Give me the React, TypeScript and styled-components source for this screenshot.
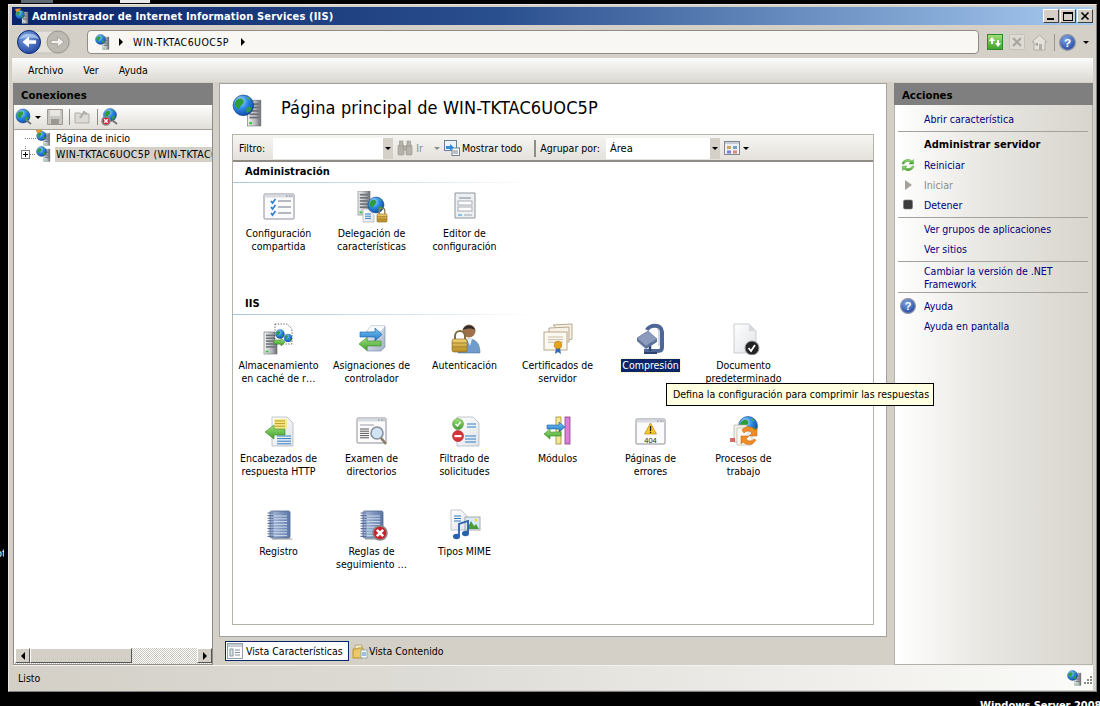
import React from 'react';
import styled, { createGlobalStyle } from 'styled-components';

const Global = createGlobalStyle`
  html, body { margin: 0; padding: 0; background: #000; overflow: hidden; }
  body { font-family: "DejaVu Sans Condensed", "Liberation Sans", sans-serif; font-size: 10.5px; color: #000; }
  * { box-sizing: border-box; }
  svg { flex: none; }
`;

const Page = styled.div`
  position: relative; width: 1100px; height: 706px; padding: 4px 3px 0 8px; background: #000; overflow: hidden;
`;
const Win = styled.div`
  width: 1089px; height: 688px; background: #d4d0c8; padding: 2px 3px 1px 3px;
  display: flex; flex-direction: column;
  border-top: 1px solid #e8e6e0; border-left: 1px solid #e8e6e0; border-right: 1px solid #808080; border-bottom: 1px solid #808080;
`;
const DesktopText = styled.div`
  position: absolute; right: 0; bottom: -6px; color: #fff; font: bold 11px "DejaVu Sans Condensed", sans-serif; white-space: nowrap; width: 120px;
`;
const DesktopSide = styled.div`
  position: absolute; left: -4px; top: 547px; color: #fff; font-size: 11px; width: 8px; overflow: hidden;
`;
const DesktopBit = styled.div<{ $l: number; $w: number; $c: string }>`
  position: absolute; top: 0; height: 3px; left: ${p => p.$l}px; width: ${p => p.$w}px; background: ${p => p.$c};
`;
const TitleBar = styled.div`
  height: 18px; flex: none; display: flex; align-items: center; padding: 0 0 0 2px;
  background: linear-gradient(to right, #0a246a 0%, #2a4f8e 45%, #a6caf0 100%);
  color: #fff; font-weight: bold; font-size: 11px;
`;
const TitleText = styled.span`
  margin-left: 2px; flex: 1; white-space: nowrap; letter-spacing: 0.17px;
`;
const WinBtn = styled.div`
  width: 16px; height: 14px; margin-left: 1px; background: #d4d0c8; display: flex; align-items: center; justify-content: center;
  border-top: 1px solid #fff; border-left: 1px solid #fff; border-right: 1px solid #404040; border-bottom: 1px solid #404040;
`;
const NavBar = styled.div`
  height: 33px; flex: none; display: flex; align-items: center; padding: 1px 0 0 5px; background: #d4d0c8;
`;
const Address = styled.div`
  width: 892px; height: 24px; margin-left: 14px; background: #f8f7f4; border: 1px solid #8f8c85; border-radius: 4px;
  display: flex; align-items: center; padding-left: 7px; flex: none; letter-spacing: .45px;
`;
const Crumb = styled.span`
  margin: 0 10px 0 8px; display: flex;
`;
const CrumbText = styled.span`
  margin-right: 4px;
`;
const Caret = styled.i<{ $c?: string }>`
  display: inline-block; width: 0; height: 0; border-top: 4px solid transparent; border-bottom: 4px solid transparent;
  border-left: 4px solid ${p => p.$c || '#000'};
`;
const Drop = styled.i<{ $c?: string }>`
  display: inline-block; width: 0; height: 0; border-left: 3px solid transparent; border-right: 3px solid transparent;
  border-top: 3px solid ${p => p.$c || '#000'}; flex: none;
`;
const NavTools = styled.div`
  display: flex; align-items: center; margin-left: 8px; gap: 6px;
`;
const NavSep = styled.div`
  width: 1px; height: 17px; background: #9a978f; margin-right: -2px;
`;
const MenuBar = styled.div`
  height: 24px; flex: none; display: flex; align-items: center; gap: 20px; padding-left: 16px;
  background: linear-gradient(#fbfbf9, #dcd9d3);
`;
const Main = styled.div`
  flex: none; height: 583px; display: flex; gap: 6px; padding: 1px 0 0 1px;
`;
const SidePanel = styled.div`
  width: 200px; flex: none; display: flex; flex-direction: column; border: 1px solid #8f8c85; border-top: 0; background: #fff; height: 582px;
`;
const ActionPanel = styled(SidePanel)`
  width: 199px; margin-left: 1px; background: linear-gradient(to right, #fff 0%, #e9e7e2 45%, #d8d5ce 100%); border-color: #b5b2aa;
`;
const PanelHead = styled.div`
  height: 22px; flex: none; margin: 0 -1px; background: #7f7f7f; color: #000; font-weight: bold; font-size: 11.3px; line-height: 25px;
  padding-left: 8px;
`;
const LeftTools = styled.div`
  height: 25px; flex: none; display: flex; align-items: center; padding-left: 1px; border-bottom: 1px solid #a5a29b;
  background: linear-gradient(#fdfdfc, #e2dfd9);
`;
const ToolSep = styled.div<{ $l: number; $r: number }>`
  width: 1px; height: 16px; background: #8f8c85; margin: 0 ${p => p.$r}px 0 ${p => p.$l}px;
`;
const Tree = styled.div`
  flex: 1; overflow: hidden; background: #fff;
`;
const TreeRow = styled.div`
  height: 16px; display: flex; align-items: center; white-space: nowrap;
`;
const TreeLabel = styled.span<{ $sel?: boolean }>`
  flex: 1; height: 15px; line-height: 15px; padding-left: 1px; margin-left: 1px; overflow: hidden;
  letter-spacing: ${p => (p.$sel ? '.32px' : '0')};
  background: ${p => (p.$sel ? '#d4d0c8' : 'transparent')};
`;
const HScroll = styled.div`
  height: 16px; flex: none; display: flex; background: repeating-conic-gradient(#c8c5bd 0 25%, #fff 0 50%) 0 0 / 2px 2px; margin: 0 0 0 1px;
`;
const ScrollBtn = styled.div`
  width: 15px; height: 15px; background: #d4d0c8; display: flex; align-items: center; justify-content: center;
  border-top: 1px solid #fff; border-left: 1px solid #fff; border-right: 1px solid #555; border-bottom: 1px solid #555; flex: none;
`;
const Thumb = styled.div`
  width: 102px; height: 15px; background: #d4d0c8; border-top: 1px solid #fff; border-left: 1px solid #fff; border-right: 1px solid #555; border-bottom: 1px solid #555;
`;
const ScrollGap = styled.div`
  flex: 1;
`;
const LeftArrow = styled.i`
  display: block; width: 0; height: 0; border-top: 4px solid transparent; border-bottom: 4px solid transparent; border-right: 4px solid #000;
`;
const Center = styled.div`
  width: 668px; flex: none; display: flex; flex-direction: column; height: 582px;
`;
const Content = styled.div`
  height: 554px; flex: none; background: #fff; border: 1px solid #a5a29b; padding: 10px 12px 11px 12px; display: flex; flex-direction: column;
`;
const PageHead = styled.div`
  height: 40px; flex: none; display: flex; align-items: flex-start;
`;
const PageTitle = styled.h1`
  margin: 3px 0 0 16px; font-weight: normal; font-size: 18px; line-height: 22px; letter-spacing: 0.13px; white-space: nowrap;
`;
const Frame = styled.div`
  flex: 1; border: 1px solid #b5b2aa; display: flex; flex-direction: column; position: relative;
`;
const FilterBar = styled.div`
  height: 27px; flex: none; display: flex; align-items: center; padding: 1px 0 0 6px; border-bottom: 2px solid #8f8c85;
  background: linear-gradient(#f6f5f2, #e4e1db);
`;
const Combo = styled.div<{ $w: number; $ml: number }>`
  width: ${p => p.$w}px; height: 21px; margin-left: ${p => p.$ml}px; background: #fff; display: flex; align-items: center; padding-left: 4px; flex: none;
`;
const ComboValue = styled.span`
  flex: 1; font-size: 11px;
`;
const ComboBtn = styled.div`
  width: 10px; height: 21px; background: #d4d0c8; display: flex; align-items: center; justify-content: center;
`;
const BarText = styled.span<{ $off?: boolean }>`
  color: ${p => (p.$off ? '#8f8c85' : '#000')}; white-space: nowrap;
`;
const BarSep = styled.div`
  width: 2px; height: 17px; background: #8f8c85; flex: none;
`;
const BarSlot = styled.div<{ $ml: number }>`
  display: flex; align-items: center; margin-left: ${p => p.$ml}px; flex: none;
`;
const Section = styled.div`
  flex: none;
`;
const SectionHead = styled.div<{ $top?: number }>`
  margin-top: ${p => p.$top || 0}px; height: 21px; line-height: 19px; padding-left: 12px; font-weight: bold; font-size: 11px; letter-spacing: .05px;
  border-bottom: 1px solid transparent;
  border-image: linear-gradient(to right, #a9c6de 0%, #d7e5f0 60%, #fff 100%) 1;
  width: 300px;
`;
const Grid = styled.div<{ $rows: number }>`
  display: grid; grid-template-columns: repeat(6, 93px); grid-auto-rows: 93px; margin-left: -1px; padding-top: 8px;
  height: ${p => p.$rows * 93 + 8}px;
`;
const Cell = styled.div`
  display: flex; flex-direction: column; align-items: center; text-align: center; line-height: 13px;
`;
const CellIcon = styled.div`
  width: 32px; height: 32px; flex: none; margin-bottom: 4px;
  svg { display: block; }
`;
const CellLabel = styled.span<{ $sel?: boolean }>`
  white-space: pre-line; padding: 0 1px;
  ${p => p.$sel ? 'background: #0a246a; color: #fff; outline: 1px dotted #f4e9b0; outline-offset: 0;' : ''}
`;
const Tooltip = styled.div`
  position: absolute; left: 433px; top: 248px; width: 268px; height: 23px; background: #ffffe1; border: 1px solid #000;
  line-height: 20px; padding-left: 6px; white-space: nowrap; z-index: 2;
`;
const Tabs = styled.div`
  flex: none; display: flex; align-items: center; padding: 4px 0 0 6px;
`;
const Tab = styled.div<{ $on?: boolean }>`
  height: 20px; display: flex; align-items: center; white-space: nowrap;
  ${p => p.$on ? 'background: #fff; border: 1px solid #0a246a; width: 124px; padding-left: 1px; gap: 3px;' : 'margin-left: 3px; gap: 1px;'}
`;
const ActionBody = styled.div`
  padding-top: 4px;
`;
const ActRow = styled.div<{ $c?: string; $b?: boolean; $two?: boolean }>`
  position: relative; display: block; padding-left: 29px;
  height: ${p => (p.$two ? 26 : 20)}px; line-height: ${p => (p.$two ? 13 : 20)}px;
  color: ${p => p.$c || '#00007f'}; font-weight: ${p => (p.$b ? 'bold' : 'normal')};
  ${p => p.$b ? 'font-size: 11px; letter-spacing: .05px;' : ''}
`;
const ActIcon = styled.span`
  position: absolute; left: 5px; top: 2px; width: 16px; height: 16px;
  svg { display: block; }
`;
const ActSep = styled.div<{ $t: number; $b: number }>`
  height: 1px; background: #a5a29b; margin: ${p => p.$t}px 4px ${p => p.$b}px 3px;
`;
const Status = styled.div`
  height: 25px; flex: none; display: flex; align-items: center; padding-left: 5px; margin-left: 1px;
  background: linear-gradient(to right, #d4d0c8 0%, #dedcd6 40%, #fbfbf9 100%); border-top: 1px solid #f4f3f0;
`;
const StatusText = styled.span`
  flex: 1;
`;
const StatusRight = styled.div`
  display: flex; align-items: flex-end;
`;

/* ---------- drawing helpers ---------- */
const Defs = () => (
  <svg width="0" height="0" style={{ position: 'absolute' }} aria-hidden="true">
    <defs>
      <radialGradient id="gl" cx=".35" cy=".3" r=".8"><stop offset="0" stopColor="#b8e4ff" /><stop offset=".45" stopColor="#2c8ae8" /><stop offset="1" stopColor="#0c3f9c" /></radialGradient>
      <linearGradient id="sv"><stop offset="0" stopColor="#f4f5f6" /><stop offset=".6" stopColor="#b4b7bb" /><stop offset="1" stopColor="#6a6e72" /></linearGradient>
      <linearGradient id="pa" x2="1" y2="1"><stop offset="0" stopColor="#fff" /><stop offset="1" stopColor="#dfe3e8" /></linearGradient>
      <linearGradient id="nb"><stop offset="0" stopColor="#a9bcdb" /><stop offset="1" stopColor="#5d77a6" /></linearGradient>
      <linearGradient id="bl" x2="0" y2="1"><stop offset="0" stopColor="#7cc4f4" /><stop offset="1" stopColor="#1e78c8" /></linearGradient>
      <linearGradient id="gr" x2="0" y2="1"><stop offset="0" stopColor="#9fe27a" /><stop offset="1" stopColor="#3f9f2e" /></linearGradient>
      <linearGradient id="go" x2="0" y2="1"><stop offset="0" stopColor="#f2d478" /><stop offset="1" stopColor="#b98a22" /></linearGradient>
      <linearGradient id="pn" x2="1" y2="1"><stop offset="0" stopColor="#eef2f7" /><stop offset="1" stopColor="#9fb0c6" /></linearGradient>
      <radialGradient id="bb" cx=".4" cy=".3" r=".8"><stop offset="0" stopColor="#7da4e4" /><stop offset="1" stopColor="#1c3f9c" /></radialGradient>
    </defs>
  </svg>
);

const Ic = ({ s = 32, v = 32, children }: { s?: number; v?: number; children: React.ReactNode }) => (
  <svg width={s} height={s} viewBox={`0 0 ${v} ${v}`}>{children}</svg>
);
const Globe = ({ x, y, r }: { x: number; y: number; r: number }) => (
  <g transform={`translate(${x} ${y}) scale(${r / 10})`}>
    <circle r="10" fill="url(#gl)" stroke="#0d3a80" strokeWidth=".6" />
    <path d="M-8,-3C-5,-8-1,-7 0,-5 1,-2-1,-1-3,1-4,4-5,4-6,3-7,1-9,0-8,-3Z" fill="#2f9e3a" />
    <path d="M4,2C6,1 8,2 8,3 7,6 5,7 3,7 3,5 2,3 4,2Z" fill="#2f9e3a" />
    <path d="M3,-8C4,-9 6,-7 7,-5 5,-5 4,-6 3,-8Z" fill="#49b34e" />
  </g>
);
const Tower = ({ x, y, w, h }: { x: number; y: number; w: number; h: number }) => (
  <g>
    <rect x={x} y={y} width={w} height={h} fill="url(#sv)" stroke="#6b6f73" strokeWidth=".6" />
    {[0, 1, 2, 3, 4].map(i => (
      <rect key={i} x={x + w * 0.15} y={y + h * 0.12 + i * h * 0.13} width={w * 0.7} height={h * 0.07} fill="#6f7377" />
    ))}
    <rect x={x + w * 0.12} y={y + h * 0.85} width={w * 0.22} height={h * 0.08} fill="#3fc23f" />
  </g>
);
const ServerGlobe = ({ s = 32 }: { s?: number }) => (
  <Ic s={s}><Tower x={15} y={6} w={13} h={25} /><Globe x={11} y={11} r={10} /></Ic>
);
const HomeIcon = ({ s = 16 }: { s?: number }) => (
  <Ic s={s}>
    <Tower x={16} y={8} w={12} h={23} />
    <Globe x={12} y={13} r={9} />
    <path d="M2,2 L14,1 L10,6 L5,8Z" fill="#f0a020" stroke="#b06a10" strokeWidth=".8" />
  </Ic>
);
const Arrow = ({ d, f }: { d: string; f: string }) => <path d={d} fill={f} stroke={f === 'url(#gr)' ? '#3a8a28' : '#1a5fa8'} strokeWidth=".6" />;
const Red = ({ x, y, r }: { x: number; y: number; r: number }) => (
  <g>
    <circle cx={x} cy={y} r={r} fill="#c9202c" stroke="#8a8a8a" strokeWidth="1.6" />
    <path d={`M${x - r * .45},${y - r * .45}L${x + r * .45},${y + r * .45}M${x + r * .45},${y - r * .45}L${x - r * .45},${y + r * .45}`} stroke="#fff" strokeWidth={r * .38} />
  </g>
);
const Lock = ({ x, y, w }: { x: number; y: number; w: number }) => (
  <g>
    <path d={`M${x + w * .22},${y}v${-w * .3}a${w * .28},${w * .28} 0 0 1 ${w * .56},0v${w * .3}`} fill="none" stroke="#8a7a55" strokeWidth={w * .13} />
    <rect x={x} y={y} width={w} height={w * .8} rx="1" fill="url(#go)" stroke="#8a6a20" strokeWidth=".6" />
    <path d={`M${x},${y + w * .27}h${w}M${x},${y + w * .52}h${w}`} stroke="#96701c" strokeWidth=".7" />
  </g>
);
const Page2 = ({ x, y, w, h }: { x: number; y: number; w: number; h: number }) => (
  <path d={`M${x},${y}h${w - 6}l6,6v${h - 6}h${-w}Z`} fill="url(#pa)" stroke="#b4b8be" strokeWidth=".8" />
);
const Lines = ({ x, y, w, n, c = '#2f7fc4', g = 2.6 }: { x: number; y: number; w: number; n: number; c?: string; g?: number }) => (
  <g stroke={c} strokeWidth="1">{Array.from({ length: n }).map((_, i) => <path key={i} d={`M${x},${y + i * g}h${w}`} />)}</g>
);
const WinFrame = ({ x, y, w, h }: { x: number; y: number; w: number; h: number }) => (
  <g>
    <rect x={x} y={y} width={w} height={h} rx="1" fill="#fbfbfc" stroke="#8a8f98" strokeWidth="1" />
    <rect x={x + .5} y={y + .5} width={w - 1} height="3" fill="#d7dae0" />
    <path d={`M${x + w - 8},${y + 2}h1.5M${x + w - 5},${y + 2}h1.5M${x + w - 2.5},${y + 2}h1`} stroke="#7a7f88" />
  </g>
);
const Notebook = () => (
  <g>
    <path d="M9,29h19l2,1-2,1H9Z" fill="#c9c9c9" />
    <rect x="7" y="2" width="20" height="27" rx="1.5" fill="url(#nb)" stroke="#4f6690" strokeWidth=".8" />
    <Lines x={11} y={7} w={13} n={8} c="#cfdbec" g={2.8} />
    {Array.from({ length: 10 }).map((_, i) => <path key={i} d={`M5,${4 + i * 2.6}h5`} stroke="#5a6f98" strokeWidth="1.1" strokeLinecap="round" />)}
  </g>
);

const Icons: Record<string, React.ReactNode> = {
  shared: <Ic><WinFrame x={1} y={3} w={30} h={25} /><g fill="none" stroke="#2d7fd0" strokeWidth="1.7"><path d="M8,10l1.5,2 3,-4M8,16l1.5,2 3,-4M8,22l1.5,2 3,-4" /></g><Lines x={15} y={10} w={13} n={3} c="#6f7683" g={6} /></Ic>,
  deleg: <Ic><Tower x={2} y={0} w={12} h={24} /><Globe x={20} y={14} r={8} /><Page2 x={7} y={18} w={11} h={13} /><Lines x={9} y={23} w={6} n={3} g={2.2} /><Lock x={21} y={23} w={10} /></Ic>,
  editor: <Ic><path d="M6,2h20v25H6Z" fill="#eef0f3" stroke="#8f949c" /><rect x="10" y="6" width="12" height="2" fill="#b6bac2" /><rect x="9" y="10" width="14" height="4" fill="#fff" stroke="#a8adb6" /><rect x="9" y="16" width="14" height="4" fill="#fff" stroke="#a8adb6" /><path d="M9,24h4" stroke="#5fa8dc" strokeWidth="1.4" /><path d="M15,24h8" stroke="#b6bac2" strokeWidth="1.4" /></Ic>,
  cache: <Ic><Tower x={1} y={9} w={13} h={22} /><path d="M12,1h12l5,5v15H12Z" fill="#fff" stroke="#444" strokeDasharray="1.4 1.4" strokeWidth=".8" /><Globe x={17} y={11} r={4.5} /><Globe x={25} y={15} r={4} /><Arrow d="M11,17h7v-2l4,4-4,4v-2h-7Z" f="url(#gr)" /></Ic>,
  mapping: <Ic><path d="M11,8l4,-5h14v21l-4,4H11Z" fill="url(#pn)" stroke="#8094b0" strokeWidth=".7" /><path d="M15,3h14l-4,5H11Z" fill="#f6f8fb" /><Arrow d="M4,9h15V5l7,6.5-7,6.5v-4H4Z" f="url(#bl)" /><Arrow d="M25,18H11v-3.5l-8,6.5 8,6.5V23h14Z" f="url(#gr)" /></Ic>,
  auth: <Ic><circle cx="20" cy="8" r="6.5" fill="#a0704a" /><path d="M14,7c1,-6 11,-6 12,0-3,-2-8,-2-12,0Z" fill="#2c2c2c" /><path d="M9,30c0,-10 4,-14 11,-14s11,5 11,14Z" fill="#6f9cc8" stroke="#3f6a96" strokeWidth=".5" /><path d="M18,16l3,7 2,-7Z" fill="#e7eef6" /><path d="M6,16v-3a5,5 0 0 1 10,0v3" fill="none" stroke="#7f6d43" strokeWidth="2" /><rect x="3" y="16" width="15" height="13" rx="2" fill="url(#go)" stroke="#846720" strokeWidth=".6" /><path d="M3,20h15M3,24h15" stroke="#97731f" strokeWidth=".8" /></Ic>,
  cert: <Ic><g fill="#f7f2e6" stroke="#b8a78e" strokeWidth="1"><path d="M11,2l19,-1v15l-3,1Z" /><path d="M7,5l20,-1v15l-20,1Z" /><rect x="2" y="9" width="23" height="18" fill="#fbf8f0" /></g><Lines x={6} y={14} w={15} n={3} c="#c8bca6" g={2.6} /><path d="M14,25l-1,6 3,-2 3,2-1,-6Z" fill="#3468b8" /><circle cx="16" cy="22" r="3.8" fill="#e8a41c" stroke="#a87410" strokeWidth=".6" /></Ic>,
  comp: <Ic><path d="M12,7c2,-5 14,-7 15,2v15c0,4-2,4-6,4H9" fill="none" stroke="#4d6799" strokeWidth="4" /><path d="M22,6c1,0 2,1 2,3v14" stroke="#9fb2d2" strokeWidth="1" fill="none" /><path d="M15,17v11" stroke="#2f4470" strokeWidth="2.5" /><path d="M9,30h13" stroke="#2f4470" strokeWidth="2" /><path d="M2,15l11,-7 9,8-11,7Z" fill="#8c9bbd" stroke="#4f6490" strokeWidth=".6" /><path d="M2,15v3l9,8 11,-7v-3l-11,7Z" fill="#5b7099" /><path d="M2,18l9,8" stroke="#a8b5cf" strokeWidth=".7" /></Ic>,
  doc: <Ic><path d="M6,1h15l7,7v22H6Z" fill="url(#pa)" stroke="#c0c3c7" strokeWidth=".8" /><path d="M21,1v7h7Z" fill="#d6d8dc" /><circle cx="24" cy="25" r="7" fill="#232323" stroke="#9a9a9a" strokeWidth="1" /><path d="M20.5,25l2.5,3 4,-6" stroke="#fff" strokeWidth="1.8" fill="none" /></Ic>,
  headers: <Ic><Page2 x={9} y={1} w={21} h={29} /><rect x="11" y="3" width="13" height="10" fill="#f7e98a" /><Lines x={12} y={5} w={10} n={3} c="#b59a20" /><Lines x={14} y={20} w={14} n={4} /><Arrow d="M22,13H11V9l-9,7 9,7v-4h11Z" f="url(#gr)" /></Ic>,
  browse: <Ic><WinFrame x={1} y={2} w={29} h={25} /><Lines x={4} y={9} w={14} n={1} c="#9a9ea6" /><Lines x={4} y={13} w={9} n={5} c="#555" g={2.2} /><circle cx="21" cy="17" r="6" fill="#cfe5f5" stroke="#8a8f98" strokeWidth="1.6" /><path d="M25,22l5,6" stroke="#8a7b62" strokeWidth="2.6" /></Ic>,
  filter: <Ic><Page2 x={8} y={1} w={22} h={29} /><Lines x={18} y={8} w={9} n={2} g={3} /><Lines x={16} y={20} w={11} n={3} g={3} /><circle cx="9" cy="8" r="5.5" fill="url(#gr)" stroke="#6f8f60" strokeWidth=".6" /><path d="M6.5,8l2,2 3,-4" stroke="#fff" strokeWidth="1.4" fill="none" /><circle cx="9" cy="20" r="5.5" fill="#d8323a" stroke="#a02026" strokeWidth=".6" /><rect x="5.5" y="19" width="7" height="2.2" fill="#fff" /></Ic>,
  modules: <Ic><rect x="14" y="1" width="5" height="27" fill="#f3e69a" stroke="#a08f2e" strokeWidth=".8" /><rect x="23" y="1" width="5" height="27" fill="#d882d4" stroke="#8f3c8c" strokeWidth=".8" /><Arrow d="M5,9h12V6l6,5-6,5v-3H5Z" f="url(#bl)" /><Arrow d="M19,16H8v-3l-6,5 6,5v-3h11Z" f="url(#gr)" /></Ic>,
  e404: <Ic><WinFrame x={1} y={3} w={29} h={25} /><path d="M15.5,7l6,11h-12Z" fill="#f5c92a" stroke="#b88a10" strokeWidth=".7" /><rect x="14.9" y="10" width="1.3" height="5" fill="#222" /><rect x="14.9" y="15.8" width="1.3" height="1.3" fill="#222" /><text x="15.5" y="26.5" fontSize="7.5" fontFamily="Liberation Sans, sans-serif" textAnchor="middle" fill="#222">404</text></Ic>,
  proc: <Ic><Globe x={20} y={10} r={9.5} /><path d="M6,9h13v17H6Z" fill="#f4f1ea" stroke="#b0aca2" strokeWidth=".7" /><path d="M9,12h15v17H9Z" fill="#fbfaf6" stroke="#b0aca2" strokeWidth=".7" opacity=".9" /><path d="M14,14a8,8 0 0 1 13,0l2,-2v8h-8l3,-3a5,5 0 0 0-8,0Z" fill="#ef8c26" stroke="#bd6210" strokeWidth=".5" /><path d="M28,24a8,8 0 0 1-13,2l-2,2v-8h8l-3,3a5,5 0 0 0 8,0Z" fill="#ef8c26" stroke="#bd6210" strokeWidth=".5" /><path d="M2,22h5v4H2Z" fill="#cf4a42" opacity=".8" /></Ic>,
  log: <Ic><Notebook /></Ic>,
  rules: <Ic><Notebook /><Red x={24} y={24} r={7} /></Ic>,
  mime: <Ic><Page2 x={2} y={1} w={16} h={20} /><Lines x={5} y={7} w={7} n={3} g={2.5} /><rect x="16" y="8" width="15" height="13" fill="#d7ecf8" stroke="#a8a8a8" /><path d="M18,20l4,-8 3,5 2,-2 3,5Z" fill="#4a9a3c" /><circle cx="27" cy="11" r="1.6" fill="#f2d24a" /><path d="M10,27V15l9,-3v12" fill="none" stroke="#2a5fb0" strokeWidth="1.8" /><ellipse cx="7.5" cy="27.5" rx="3.5" ry="2.8" fill="#2a5fb0" /><ellipse cx="16.5" cy="24.5" rx="3.5" ry="2.8" fill="#2a5fb0" /></Ic>,
};

const admin = [
  { id: 'shared', t: 'Configuración\ncompartida' },
  { id: 'deleg', t: 'Delegación de\ncaracterísticas' },
  { id: 'editor', t: 'Editor de\nconfiguración' },
];
const iis = [
  { id: 'cache', t: 'Almacenamiento\nen caché de r…' },
  { id: 'mapping', t: 'Asignaciones de\ncontrolador' },
  { id: 'auth', t: 'Autenticación' },
  { id: 'cert', t: 'Certificados de\nservidor' },
  { id: 'comp', t: 'Compresión', sel: true },
  { id: 'doc', t: 'Documento\npredeterminado' },
  { id: 'headers', t: 'Encabezados de\nrespuesta HTTP' },
  { id: 'browse', t: 'Examen de\ndirectorios' },
  { id: 'filter', t: 'Filtrado de\nsolicitudes' },
  { id: 'modules', t: 'Módulos' },
  { id: 'e404', t: 'Páginas de\nerrores' },
  { id: 'proc', t: 'Procesos de\ntrabajo' },
  { id: 'log', t: 'Registro' },
  { id: 'rules', t: 'Reglas de\nseguimiento …' },
  { id: 'mime', t: 'Tipos MIME' },
];

const Feature = ({ id, t, sel }: { id: string; t: string; sel?: boolean }) => (
  <Cell>
    <CellIcon>{Icons[id]}</CellIcon>
    <CellLabel $sel={sel}>{t}</CellLabel>
  </Cell>
);

const HelpIcon = ({ s = 16 }: { s?: number }) => (
  <Ic s={s} v={16}>
    <circle cx="8" cy="8" r="7.4" fill="url(#bb)" stroke="#8d95a8" strokeWidth="1.2" />
    <text x="8" y="12" fontSize="11" fontWeight="bold" fontFamily="Liberation Sans, sans-serif" textAnchor="middle" fill="#fff">?</text>
  </Ic>
);
const NavArrows = () => (
  <svg width="56" height="30" viewBox="0 0 56 30">
    <rect x="1" y="4" width="52" height="22" rx="11" fill="#e4e1da" stroke="#c3c0b8" />
    <circle cx="12" cy="15" r="11.5" fill="url(#bb)" stroke="#0e2f7a" />
    <path d="M2,12a11,9 0 0 1 20,0a18,8 0 0 0-20,0Z" fill="#bcd6f6" opacity=".7" />
    <path d="M19,13.2h-7v-3.7L5.5,15l6.5,5.5v-3.7h7Z" fill="#fff" />
    <circle cx="41" cy="15" r="11" fill="#bdbab3" stroke="#9a978f" />
    <path d="M34,13.4h6.5v-3.4L47,15l-6.5,5v-3.4H34Z" fill="#f2f1ee" stroke="#8f8c85" strokeWidth=".6" />
  </svg>
);

export default function App() {
  return (
    <>
      <Global />
      <Defs />
      <Page>
        <DesktopBit $l={21} $w={32} $c="#5f6a72" />
        <DesktopBit $l={120} $w={30} $c="#e8e8e8" />
        <DesktopSide>otl</DesktopSide>
        <Win>
          <TitleBar>
            <HomeIcon s={16} />
            <TitleText>Administrador de Internet Information Services (IIS)</TitleText>
            <WinBtn><svg width="10" height="10"><rect x="1" y="7" width="7" height="2" fill="#000" /></svg></WinBtn>
            <WinBtn><svg width="12" height="10"><rect x="1.5" y="1.5" width="9" height="8" fill="none" stroke="#000" /><rect x="1" y="1" width="10" height="2" fill="#000" /></svg></WinBtn>
            <WinBtn><svg width="10" height="10"><path d="M1.5,1.5L8.5,8.5M8.5,1.5L1.5,8.5" stroke="#000" strokeWidth="1.6" /></svg></WinBtn>
          </TitleBar>
          <NavBar>
            <NavArrows />
            <Address>
              <ServerGlobe s={16} />
              <Crumb><Caret /></Crumb>
              <CrumbText>WIN-TKTAC6UOC5P</CrumbText>
              <Crumb><Caret /></Crumb>
            </Address>
            <NavTools>
              <svg width="16" height="16" viewBox="0 0 16 16"><rect x=".5" y=".5" width="15" height="15" fill="url(#gr)" stroke="#2f8a2a" /><path d="M2,7l3,-4 3,4H6v3H4V7ZM14,9l-3,4-3,-4h2V6h2v3Z" fill="#fff" /></svg>
              <svg width="16" height="16" viewBox="0 0 16 16"><rect x=".5" y=".5" width="15" height="15" rx="1" fill="#dedbd4" stroke="#c4c1b9" /><path d="M4,4l8,8M12,4l-8,8" stroke="#aaa79f" strokeWidth="2.4" /></svg>
              <svg width="17" height="17" viewBox="0 0 17 17"><path d="M8.5,1L1,8h2v8h11V8h2Z" fill="#e3e1db" stroke="#b0aea6" /><rect x="8" y="10" width="3" height="6" fill="#b0aea6" /><rect x="4.5" y="9" width="2.5" height="2.5" fill="#a4a29a" /></svg>
              <NavSep />
              <HelpIcon s={17} />
              <Drop style={{ marginLeft: 1 }} />
            </NavTools>
          </NavBar>
          <MenuBar>
            <span>Archivo</span>
            <span>Ver</span>
            <span>Ayuda</span>
          </MenuBar>
          <Main>
            <SidePanel>
              <PanelHead>Conexiones</PanelHead>
              <LeftTools>
                <svg width="18" height="18" viewBox="0 0 18 18"><Globe x={8} y={8} r={7} /><path d="M11,12l5,4" stroke="#777" strokeWidth="2" /></svg>
                <Drop style={{ margin: '0 6px 0 2px' }} />
                <svg width="16" height="16" viewBox="0 0 16 16"><path d="M.5,.5h15v15H.5Z" fill="#c9c7c1" stroke="#9a9890" /><rect x="3" y="1" width="10" height="6" fill="#e8e6e1" /><rect x="4" y="10" width="8" height="5" fill="#9a9890" /></svg>
                <ToolSep $l={6} $r={4} />
                <svg width="16" height="16" viewBox="0 0 16 16"><path d="M1,4h5l1,1h8v9H1Z" fill="#dcdad4" stroke="#b0aea6" /><path d="M6,9l4,-6 3,2" stroke="#b0aea6" strokeWidth="2" fill="none" /></svg>
                <ToolSep $l={7} $r={3} />
                <svg width="18" height="18" viewBox="0 0 18 18"><Globe x={9} y={7} r={6.5} /><path d="M11,12l5,4" stroke="#777" strokeWidth="2" /><Red x={5} y={13} r={4} /></svg>
              </LeftTools>
              <Tree>
                <TreeRow>
                  <svg width="40" height="16"><path d="M11,8.5h11" stroke="#888" strokeDasharray="1 1" /><g transform="translate(21 -1)"><HomeIcon s={17} /></g></svg>
                  <TreeLabel>Página de inicio</TreeLabel>
                </TreeRow>
                <TreeRow>
                  <svg width="40" height="16"><path d="M11.5,0v3M16,8.5h6" stroke="#888" strokeDasharray="1 1" /><rect x="7.5" y="4.5" width="8" height="8" fill="#fff" stroke="#808080" /><path d="M9,8.5h5M11.5,6v5" stroke="#000" /><g transform="translate(22 0)"><ServerGlobe s={16} /></g></svg>
                  <TreeLabel $sel>WIN-TKTAC6UOC5P (WIN-TKTAC6UOC5P\Administrador)</TreeLabel>
                </TreeRow>
              </Tree>
              <HScroll>
                <ScrollBtn><LeftArrow /></ScrollBtn>
                <Thumb />
                <ScrollGap />
                <ScrollBtn><Caret /></ScrollBtn>
              </HScroll>
            </SidePanel>

            <Center>
              <Content>
                <PageHead>
                  <ServerGlobe s={33} />
                  <PageTitle>Página principal de WIN-TKTAC6UOC5P</PageTitle>
                </PageHead>
                <Frame>
                  <FilterBar>
                    <BarText>Filtro:</BarText>
                    <Combo $w={120} $ml={8}><ComboValue /><ComboBtn><Drop /></ComboBtn></Combo>
                    <BarSlot $ml={4}>
                      <svg width="16" height="16" viewBox="0 0 16 16"><g fill="#b5b2aa" stroke="#97948c" strokeWidth=".6"><rect x="1" y="5" width="6" height="10" rx="1" /><rect x="9" y="5" width="6" height="10" rx="1" /><rect x="2.5" y="1" width="3.5" height="5" /><rect x="10" y="1" width="3.5" height="5" /><rect x="6.5" y="6" width="3" height="4" /></g></svg>
                    </BarSlot>
                    <BarSlot $ml={3}><BarText $off>Ir</BarText></BarSlot>
                    <BarSlot $ml={11}><Drop $c="#8f8c85" /></BarSlot>
                    <BarSlot $ml={4}>
                      <svg width="16" height="16" viewBox="0 0 16 16"><rect x=".5" y=".5" width="12" height="10" fill="#eef2f6" stroke="#6f7f92" /><rect x="8" y="8" width="7.5" height="7.5" fill="#fff" stroke="#6f7f92" /><path d="M9,11h5M9,13h5" stroke="#6f7f92" /><path d="M2,6h4V4l4,3.5L6,11V9H2Z" fill="#2f8fdc" /></svg>
                    </BarSlot>
                    <BarSlot $ml={2}><BarText>Mostrar todo</BarText></BarSlot>
                    <BarSlot $ml={12}><BarSep /></BarSlot>
                    <BarSlot $ml={4}><BarText>Agrupar por:</BarText></BarSlot>
                    <Combo $w={114} $ml={6}><ComboValue>Área</ComboValue><ComboBtn><Drop /></ComboBtn></Combo>
                    <BarSlot $ml={4}>
                      <svg width="16" height="16" viewBox="0 0 16 16"><rect x=".5" y="1.5" width="15" height="13" fill="#eef0f4" stroke="#7f8692" /><rect x="1" y="2" width="14" height="2" fill="#c7cbd3" /><rect x="3" y="6" width="4" height="3" fill="#c9a860" /><rect x="9" y="6" width="4" height="3" fill="#6f9ed4" /><rect x="3" y="10.5" width="4" height="3" fill="#7a7fd0" /><rect x="9" y="10.5" width="4" height="3" fill="#d88a70" /></svg>
                    </BarSlot>
                    <BarSlot $ml={3}><Drop /></BarSlot>
                  </FilterBar>
                  <Section>
                    <SectionHead>Administración</SectionHead>
                    <Grid $rows={1}>
                      {admin.map(f => <Feature key={f.id} {...f} />)}
                    </Grid>
                  </Section>
                  <Section>
                    <SectionHead $top={10}>IIS</SectionHead>
                    <Grid $rows={3}>
                      {iis.map(f => <Feature key={f.id} {...f} />)}
                    </Grid>
                  </Section>
                  <Tooltip>Defina la configuración para comprimir las respuestas</Tooltip>
                </Frame>
              </Content>
              <Tabs>
                <Tab $on>
                  <svg width="16" height="16" viewBox="0 0 16 16"><rect x=".5" y=".5" width="15" height="15" fill="#fbfbfc" stroke="#98a0ac" /><rect x="1" y="1" width="14" height="3" fill="#c9ced6" /><path d="M3,6h3v7H3ZM8,7h5M8,9.5h5M8,12h5" fill="#dfe3e9" stroke="#8a929e" /></svg>
                  <span>Vista Características</span>
                </Tab>
                <Tab>
                  <svg width="16" height="16" viewBox="0 0 16 16"><path d="M3,2h7v4H3Z" fill="#f0e8c8" stroke="#b8a878" /><path d="M1,6h4l1,-1h5v10H1Z" fill="#edc866" stroke="#b8962e" /><rect x="9" y="7" width="6" height="8" fill="#fff" stroke="#9aa" /><path d="M10,10h4M10,12h4" stroke="#3a7fc0" /></svg>
                  <span>Vista Contenido</span>
                </Tab>
              </Tabs>
            </Center>

            <ActionPanel>
              <PanelHead>Acciones</PanelHead>
              <ActionBody>
                <ActRow>Abrir característica</ActRow>
                <ActSep $t={2} $b={3} />
                <ActRow $b $c="#000">Administrar servidor</ActRow>
                <ActRow>
                  <ActIcon><svg width="16" height="16" viewBox="0 0 16 16"><path d="M2,7a6,6 0 0 1 10,-3l1.5,-1.5V7H9l1.5,-1.5A4,4 0 0 0 4,7Z" fill="url(#gr)" stroke="#3a8a28" strokeWidth=".4" /><path d="M14,9a6,6 0 0 1-10,3l-1.5,1.5V9H7l-1.5,1.5A4,4 0 0 0 12,9Z" fill="url(#gr)" stroke="#3a8a28" strokeWidth=".4" /></svg></ActIcon>
                  Reiniciar
                </ActRow>
                <ActRow $c="#8f8c85">
                  <ActIcon><svg width="16" height="16" viewBox="0 0 16 16"><path d="M5,3l7,5-7,5Z" fill="#a5a29b" /></svg></ActIcon>
                  Iniciar
                </ActRow>
                <ActRow>
                  <ActIcon><svg width="16" height="16" viewBox="0 0 16 16"><rect x="3.5" y="3" width="9" height="9" rx="1.5" fill="#3c3c3c" stroke="#777" strokeWidth=".6" /></svg></ActIcon>
                  Detener
                </ActRow>
                <ActSep $t={2} $b={1} />
                <ActRow>Ver grupos de aplicaciones</ActRow>
                <ActRow>Ver sitios</ActRow>
                <ActSep $t={2} $b={3} />
                <ActRow $two>Cambiar la versión de .NET<br />Framework</ActRow>
                <ActSep $t={1} $b={3} />
                <ActRow>
                  <ActIcon><HelpIcon /></ActIcon>
                  Ayuda
                </ActRow>
                <ActRow>Ayuda en pantalla</ActRow>
              </ActionBody>
            </ActionPanel>
          </Main>
          <Status>
            <StatusText>Listo</StatusText>
            <StatusRight>
              <ServerGlobe s={16} />
              <svg width="10" height="12" viewBox="0 0 10 12"><g fill="#8a8a82"><rect x="7" y="2" width="2" height="2" /><rect x="4" y="5" width="2" height="2" /><rect x="7" y="5" width="2" height="2" /><rect x="1" y="8" width="2" height="2" /><rect x="4" y="8" width="2" height="2" /><rect x="7" y="8" width="2" height="2" /></g></svg>
            </StatusRight>
          </Status>
        </Win>
        <DesktopText>Windows Server 2008</DesktopText>
      </Page>
    </>
  );
}
